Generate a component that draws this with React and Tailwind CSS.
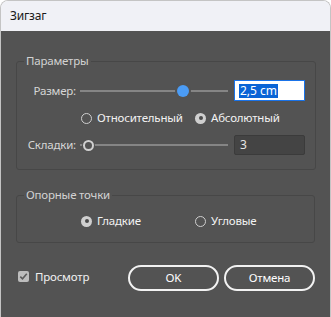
import React from 'react'

const font = { fontFamily: '"Noto Sans", "Open Sans", Arial, sans-serif' }

const Radio = ({ checked, label, className = '' }) => (
  <div className={`flex items-center h-[14px] ${className}`}>
    {checked ? (
      <span className="w-[11px] h-[11px] rounded-full bg-[#cfcfcf] flex items-center justify-center shrink-0">
        <span className="w-[4px] h-[4px] rounded-full bg-[#4a4a4a]" />
      </span>
    ) : (
      <span className="w-[11px] h-[11px] rounded-full border-[1.5px] border-[#cfcfcf] shrink-0" />
    )}
    <span className="ml-[5px] text-[11.5px] tracking-[-0.2px] text-[#f2f2f2] leading-none">{label}</span>
  </div>
)

const Slider = ({ children }) => (
  <div className="relative w-[148px] h-[14px] flex items-center">
    <div className="w-full h-[2px] bg-[#858585]" />
    {children}
  </div>
)

export default function App() {
  return (
    <div style={font} className="w-[331px] h-[317px] bg-white text-[11.5px] tracking-[-0.2px]">
      <div className="w-[331px] h-[317px] rounded-t-[8px] overflow-hidden border-t border-x border-[#c4c4c4] flex flex-col">
        <div className="h-[30px] bg-[#f0f1f6] flex items-center pl-[9px] text-[12px] text-[#1a1a1a] shrink-0">
          Зигзаг
        </div>
        <div className="flex-1 bg-[#535353] px-[15px]">
          <fieldset className="mt-[22px] border border-[#474747] rounded-[3px] pl-[9px] pr-[10px] pt-[11px] pb-[14px]">
            <legend className="-ml-[2px] px-[2px] leading-[16px] text-[#d2d2d2]">Параметры</legend>
            <div className="flex items-center h-[21px]">
              <div className="w-[50px] text-right text-[#d6d6d6]">Размер:</div>
              <div className="ml-[4px]">
                <Slider>
                  <span className="absolute left-[95px] w-[16px] h-[16px] rounded-full bg-[#535353] flex items-center justify-center">
                    <span className="w-[12px] h-[12px] rounded-full bg-[#4b9cf5]" />
                  </span>
                </Slider>
              </div>
              <div className="ml-[6px] w-[71px] h-[21px] bg-white border border-[#1a73e8] flex items-center pl-[4px]">
                <span className="bg-[#0a64d6] text-white text-[12px] tracking-normal leading-[14px] px-[1px]">2,5 cm</span>
              </div>
            </div>
            <div className="flex mt-[10px] pl-[55px]">
              <Radio label="Относительный" className="w-[114px]" />
              <Radio label="Абсолютный" checked />
            </div>
            <div className="flex items-center h-[20px] mt-[10px]">
              <div className="w-[50px] text-right text-[#d6d6d6]">Складки:</div>
              <div className="ml-[4px]">
                <Slider>
                  <span className="absolute left-[2px] w-[13px] h-[13px] rounded-full bg-[#535353] flex items-center justify-center">
                    <span className="w-[11px] h-[11px] rounded-full border-2 border-[#d0d0d0] bg-[#535353]" />
                  </span>
                </Slider>
              </div>
              <div className="ml-[6px] w-[71px] h-[20px] bg-[#444444] border border-[#3b3b3b] rounded-[2px] flex items-center pl-[5px] text-[12px] text-[#e6e6e6]">
                3
              </div>
            </div>
          </fieldset>

          <fieldset className="mt-[17px] border border-[#474747] rounded-[3px] pl-[9px] pr-[10px] pt-[11px] pb-[14px]">
            <legend className="-ml-[2px] px-[2px] leading-[16px] text-[#d2d2d2]">Опорные точки</legend>
            <div className="flex pl-[55px]">
              <Radio label="Гладкие" checked className="w-[114px]" />
              <Radio label="Угловые" />
            </div>
          </fieldset>

          <div className="flex items-center mt-[22px]">
            <div className="flex items-center -mt-[3px] w-[111px] ml-[2px]">
              <span className="w-[11px] h-[11px] rounded-[2px] bg-[#bdbdbd] flex items-center justify-center">
                <svg width="9" height="9" viewBox="0 0 9 9">
                  <path d="M1.3 4.6 L3.5 6.8 L7.8 1.8" fill="none" stroke="#5c5c5c" strokeWidth="1.6" />
                </svg>
              </span>
              <span className="ml-[6px] text-[#f0f0f0]">Просмотр</span>
            </div>
            <button className="w-[92px] h-[26px] rounded-full border-2 border-[#f2f2f2] text-white flex items-center justify-center">
              OK
            </button>
            <button className="ml-[5px] w-[92px] h-[26px] rounded-full border-2 border-[#f2f2f2] text-white flex items-center justify-center">
              Отмена
            </button>
          </div>
        </div>
      </div>
    </div>
  )
}
